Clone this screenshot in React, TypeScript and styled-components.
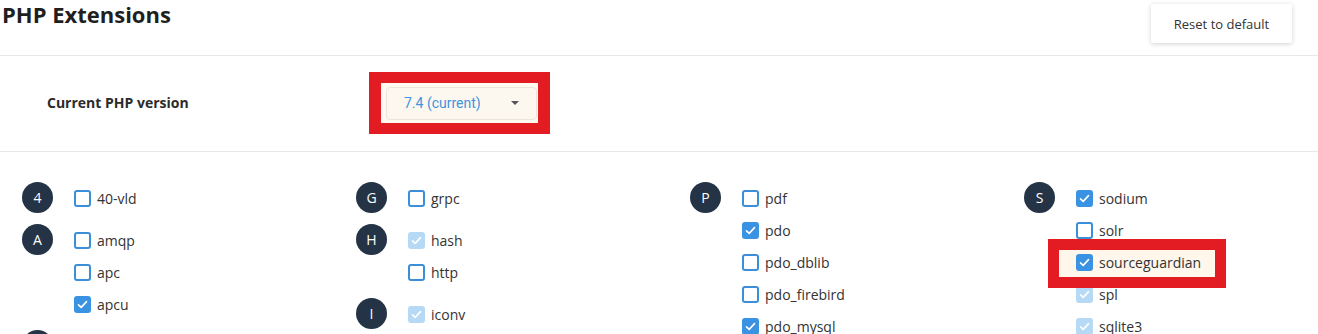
import styled, { createGlobalStyle, css } from "styled-components";

type CheckState = "off" | "on" | "locked";

interface Extension {
  name: string;
  state: CheckState;
  highlight?: boolean;
}

interface Group {
  letter: string;
  items: Extension[];
}

const GlobalStyle = createGlobalStyle`
  html, body {
    margin: 0;
    padding: 0;
    background: #ffffff;
    font-family: "Open Sans", "Liberation Sans", sans-serif;
    color: #333333;
  }
  *, *::before, *::after {
    box-sizing: border-box;
  }
`;

const Page = styled.div`
  width: 100%;
  height: 100vh;
  overflow: hidden;
`;

const Header = styled.div`
  display: flex;
  justify-content: space-between;
  align-items: flex-start;
  height: 56px;
  border-bottom: 1px solid #e8e8e8;
`;

const Title = styled.h1`
  margin: 0 0 0 2px;
  font-size: 22px;
  line-height: 28px;
  font-weight: 700;
  color: #1f1f1f;
`;

const ResetButton = styled.button`
  margin: 4px 26px 0 0;
  width: 141px;
  height: 39px;
  border: none;
  border-radius: 2px;
  background: #ffffff;
  box-shadow: 0 1px 5px rgba(0, 0, 0, 0.18);
  font-family: "Open Sans", "Liberation Sans", sans-serif;
  font-size: 13px;
  color: #333333;
  cursor: pointer;
`;

const VersionRow = styled.div`
  display: flex;
  align-items: center;
  height: 96px;
  padding-left: 47px;
  border-bottom: 1px solid #e8e8e8;
`;

const VersionLabel = styled.div`
  width: 322px;
  font-size: 14px;
  font-weight: 700;
  color: #2b2b2b;
  margin-top: -2px;
`;

const AnnotationFrame = styled.div`
  display: flex;
  margin-top: -2px;
  border: 11px solid #e31b23;
  border-left-width: 12px;
  border-right-width: 12px;
  padding: 4px 1px 3px 5px;
  background: #fffaf1;
`;

const Select = styled.div`
  display: flex;
  align-items: center;
  justify-content: space-between;
  width: 151px;
  height: 33px;
  padding: 0 17px 0 17px;
  border: 1px solid #ebe5d9;
  border-radius: 4px;
  background: #fcf8ef;
  font-family: Roboto, "Liberation Sans", sans-serif;
  font-size: 14px;
  color: #3f95dd;
`;

const Caret = styled.span`
  width: 0;
  height: 0;
  border-left: 4px solid transparent;
  border-right: 4px solid transparent;
  border-top: 4px solid #555555;
`;

const ExtensionGrid = styled.div`
  display: grid;
  grid-template-columns: repeat(4, 334px);
  padding: 30px 0 0 22px;
`;

const Column = styled.div`
  display: flex;
  flex-direction: column;
  gap: 10px;
`;

const GroupRow = styled.div`
  display: flex;
  align-items: flex-start;
  gap: 21px;
`;

const Badge = styled.div`
  flex: 0 0 31px;
  height: 31px;
  border-radius: 50%;
  background: #243346;
  color: #ffffff;
  display: grid;
  place-items: center;
  font-size: 14px;
  font-weight: 400;
`;

const ItemList = styled.div`
  display: flex;
  flex-direction: column;
`;

const Item = styled.label<{ $highlight?: boolean }>`
  display: flex;
  align-items: center;
  gap: 6px;
  height: 32px;
  font-size: 14px;
  color: #333333;
  white-space: nowrap;

  ${({ $highlight }) =>
    $highlight &&
    css`
      position: relative;
      &::before {
        content: "";
        position: absolute;
        left: -28px;
        top: -7px;
        width: 178px;
        height: 49px;
        border: 11px solid #e31b23;
        background: #fff7ec;
      }
      & > * {
        position: relative;
        z-index: 1;
      }
    `}
`;

const Box = styled.span<{ $state: CheckState }>`
  display: grid;
  place-items: center;
  width: 17px;
  height: 17px;
  border-radius: 3px;
  border: 2px solid
    ${({ $state }) => ($state === "off" ? "#3b8ed8" : $state === "on" ? "#3a93e2" : "#b6d9f6")};
  background: ${({ $state }) => ($state === "on" ? "#3a93e2" : $state === "locked" ? "#b6d9f6" : "#ffffff")};
`;

const CheckMark = () => (
  <svg width="13" height="13" viewBox="0 0 13 13">
    <polyline points="2.5,6.8 5.2,9.4 10.5,3.6" fill="none" stroke="#ffffff" strokeWidth="1.6" strokeLinecap="round" strokeLinejoin="round" />
  </svg>
);

const columns: Group[][] = [
  [
    { letter: "4", items: [{ name: "40-vld", state: "off" }] },
    {
      letter: "A",
      items: [
        { name: "amqp", state: "off" },
        { name: "apc", state: "off" },
        { name: "apcu", state: "on" },
      ],
    },
    { letter: "B", items: [{ name: "bcmath", state: "on" }, { name: "bz2", state: "on" }] },
  ],
  [
    { letter: "G", items: [{ name: "grpc", state: "off" }] },
    {
      letter: "H",
      items: [
        { name: "hash", state: "locked" },
        { name: "http", state: "off" },
      ],
    },
    { letter: "I", items: [{ name: "iconv", state: "locked" }, { name: "imagick", state: "off" }] },
  ],
  [
    {
      letter: "P",
      items: [
        { name: "pdf", state: "off" },
        { name: "pdo", state: "on" },
        { name: "pdo_dblib", state: "off" },
        { name: "pdo_firebird", state: "off" },
        { name: "pdo_mysql", state: "on" },
        { name: "pdo_oci", state: "off" },
      ],
    },
  ],
  [
    {
      letter: "S",
      items: [
        { name: "sodium", state: "on" },
        { name: "solr", state: "off" },
        { name: "sourceguardian", state: "on", highlight: true },
        { name: "spl", state: "locked" },
        { name: "sqlite3", state: "locked" },
        { name: "ssh2", state: "off" },
      ],
    },
  ],
];

const App: React.FC = () => {
  return (
    <Page>
      <GlobalStyle />
      <Header>
        <Title>PHP Extensions</Title>
        <ResetButton>Reset to default</ResetButton>
      </Header>
      <VersionRow>
        <VersionLabel>Current PHP version</VersionLabel>
        <AnnotationFrame>
          <Select>
            <span>7.4 (current)</span>
            <Caret />
          </Select>
        </AnnotationFrame>
      </VersionRow>
      <ExtensionGrid>
        {columns.map((groups, ci) => (
          <Column key={ci}>
            {groups.map((group) => (
              <GroupRow key={group.letter}>
                <Badge>{group.letter}</Badge>
                <ItemList>
                  {group.items.map((ext) => (
                    <Item key={ext.name} $highlight={ext.highlight}>
                      <Box $state={ext.state}>{ext.state !== "off" && <CheckMark />}</Box>
                      <span>{ext.name}</span>
                    </Item>
                  ))}
                </ItemList>
              </GroupRow>
            ))}
          </Column>
        ))}
      </ExtensionGrid>
    </Page>
  );
};

export default App;
